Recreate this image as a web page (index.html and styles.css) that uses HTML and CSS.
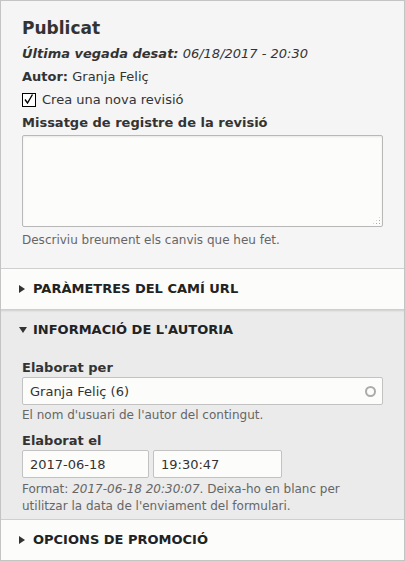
FILE: index.html
```html
<!DOCTYPE html>
<html lang="ca">
<head>
<meta charset="utf-8">
<link rel="stylesheet" href="styles.css">
</head>
<body>
<div class="meta">
  <div class="header">
    <h3 class="status">Publicat</h3>
    <div class="line changed"><b>Última vegada desat:</b> 06/18/2017 - 20:30</div>
    <div class="line"><b>Autor:</b> Granja Feliç</div>
    <label class="check"><span class="box"><svg width="13" height="13" viewBox="0 0 13 13"><path d="M3 6.5 L5.5 10 L10.5 1.5" fill="none" stroke="#000" stroke-width="1.4"/></svg></span>Crea una nova revisió</label>
    <div class="field">
      <div class="label">Missatge de registre de la revisió</div>
      <div class="textarea"><span class="grip"></span></div>
      <div class="desc">Descriviu breument els canvis que heu fet.</div>
    </div>
  </div>
  <div class="section closed">
    <div class="summary"><span class="tri-r"></span>Paràmetres del camí URL</div>
  </div>
  <div class="section open">
    <div class="summary"><span class="tri-d"></span>Informació de l'autoria</div>
    <div class="body">
      <div class="field">
        <div class="label">Elaborat per</div>
        <div class="input wide">Granja Feliç (6)<span class="throbber"></span></div>
        <div class="desc">El nom d'usuari de l'autor del contingut.</div>
      </div>
      <div class="field">
        <div class="label">Elaborat el</div>
        <div class="pair">
          <div class="input date">2017-06-18</div>
          <div class="input time">19:30:47</div>
        </div>
        <div class="desc">Format: <em>2017-06-18 20:30:07</em>. Deixa-ho en blanc per utilitzar la data de l'enviament del formulari.</div>
      </div>
    </div>
  </div>
  <div class="section closed last">
    <div class="summary"><span class="tri-r"></span>Opcions de promoció</div>
  </div>
</div>
</body>
</html>
```
FILE: styles.css
```css
html, body { margin: 0; padding: 0; }
body {
  font-family: "DejaVu Sans", sans-serif;
  color: #333;
  font-size: 13px;
  background: #fff;
}
.meta {
  border: 1px solid #c4c4c4;
  height: 559px;
  display: flex;
  flex-direction: column;
  background: #fcfcfa;
}
.header {
  background: #f5f5f5;
  padding: 16px 21px 19px;
  border-bottom: 1px solid #cfcfcf;
}
.status {
  margin: 0 0 6px;
  font-size: 17px;
  line-height: 22px;
  font-weight: bold;
}
.line {
  line-height: 18px;
  margin-bottom: 5px;
}
.changed { font-style: italic; }
.check {
  display: flex;
  align-items: center;
  line-height: 18px;
  margin-bottom: 5px;
}
.box {
  width: 12px;
  height: 12px;
  border: 1px solid #000;
  background: #fff;
  margin-right: 6px;
  display: flex;
}
.box svg { display: block; margin: -1px 0 0 -1px; }
.field { display: flex; flex-direction: column; }
.label {
  font-weight: bold;
  line-height: 18px;
  margin-bottom: 3px;
}
.textarea {
  height: 90px;
  border: 1px solid #b8b8b8;
  border-radius: 2px;
  background: #fcfcfa;
  position: relative;
  box-shadow: inset 0 1px 2px rgba(0,0,0,0.08);
}
.grip {
  position: absolute;
  right: 1px;
  bottom: 1px;
  width: 9px;
  height: 9px;
  background:
    radial-gradient(circle, #aaa 0.8px, transparent 1px) 0 0 / 3px 3px;
  clip-path: polygon(100% 0, 100% 100%, 0 100%);
}
.desc {
  color: #666;
  font-size: 12px;
  line-height: 17px;
  margin-top: 5px;
}
.section { border-bottom: 1px solid #cfcfcf; }
.section.closed { background: #fcfcfa; }
.section.last { border-bottom: none; flex: 1; }
.summary {
  font-weight: bold;
  text-transform: uppercase;
  font-size: 13px;
  padding: 11px 0 11px 18px;
  line-height: 18px;
  display: flex;
  align-items: center;
  color: #222;
}
.tri-r {
  width: 0; height: 0;
  border-left: 6px solid #333;
  border-top: 4px solid transparent;
  border-bottom: 4px solid transparent;
  margin-right: 8px;
}
.tri-d {
  width: 0; height: 0;
  border-top: 6px solid #333;
  border-left: 4px solid transparent;
  border-right: 4px solid transparent;
  margin-right: 6px;
}
.section.open {
  background: #ebebeb;
  box-shadow: inset 0 2px 2px -1px rgba(0,0,0,0.12);
}
.open .body { padding: 9px 21px 4px; }
.open .label { margin-bottom: 0; }
.open .desc { margin-top: 2px; }
.open .pair + .desc { margin-top: 3px; }
.open .field + .field { margin-top: 8px; }
.input {
  border: 1px solid #c2c2c2;
  border-radius: 2px;
  background: #fcfcfa;
  box-sizing: border-box;
  height: 28px;
  padding: 0 7px;
  display: flex;
  align-items: center;
  position: relative;
}
.throbber {
  position: absolute;
  right: 6px;
  top: 8px;
  border: 2px solid #ababab;
  border-radius: 50%;
  box-sizing: border-box;
  width: 11px;
  height: 11px;
}
.pair { display: flex; gap: 4px; }
.date { width: 127px; }
.time { width: 129px; }
```
